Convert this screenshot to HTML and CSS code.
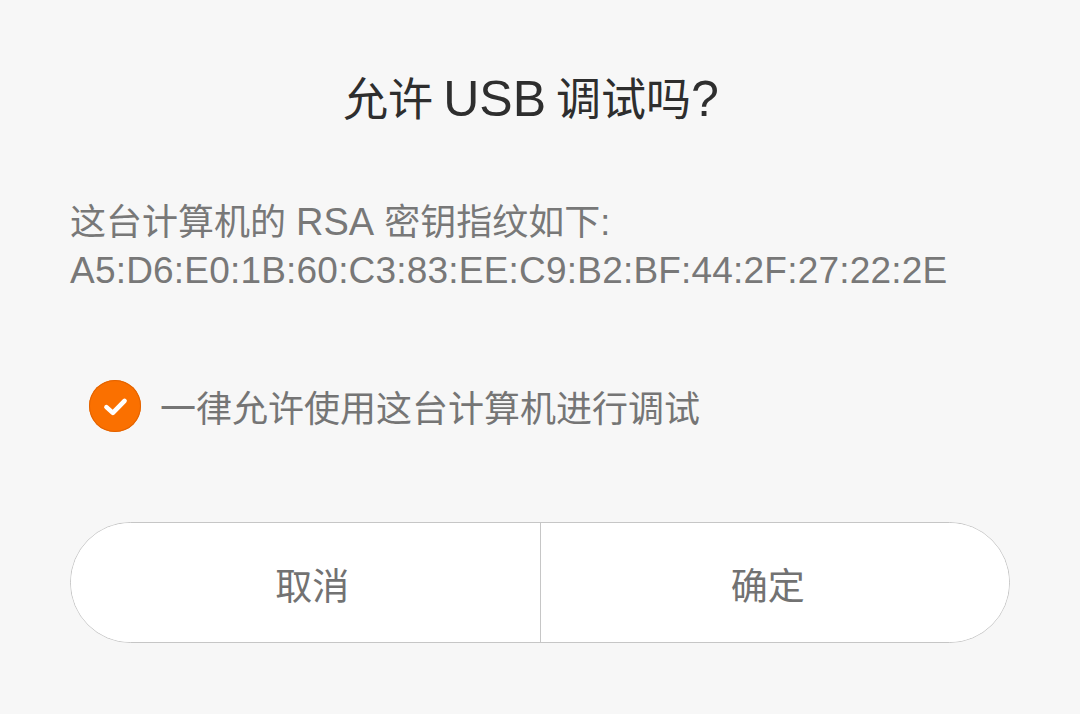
FILE: index.html
```html
<!DOCTYPE html>
<html lang="zh-CN">
<head>
<meta charset="utf-8">
<link rel="stylesheet" href="styles.css">
</head>
<body>
<div class="dialog">
  <h1 class="title">允许 <span class="lat">USB</span> 调试吗<span class="lat">?</span></h1>
  <div class="message">
    <p>这台计算机的 <span class="lat">RSA</span> 密钥指纹如下:</p>
    <p class="fingerprint">A5:D6:E0:1B:60:C3:83:EE:C9:B2:BF:44:2F:27:22:2E</p>
  </div>
  <div class="check-row">
    <span class="check">
      <svg viewBox="0 0 24 24"><path d="M4.5 12.5 L9.8 17.3 L19.5 7.3" fill="none" stroke="#fff" stroke-width="3.8" stroke-linecap="round" stroke-linejoin="round"/></svg>
    </span>
    <span class="check-label">一律允许使用这台计算机进行调试</span>
  </div>
  <div class="buttons">
    <button class="btn">取消</button>
    <button class="btn">确定</button>
  </div>
</div>
</body>
</html>
```
FILE: styles.css
```css
html, body {
  margin: 0;
  padding: 0;
  background: #f7f7f7;
  height: 100%;
}
body {
  font-family: "Liberation Sans", "Noto Sans CJK SC", sans-serif;
  -webkit-font-smoothing: antialiased;
}
.dialog {
  padding: 69px 70px 0 70px;
  display: flex;
  flex-direction: column;
}
.title {
  margin: 0;
  text-align: center;
  font-family: "Noto Sans CJK SC", sans-serif;
  font-size: 45px;
  font-weight: 400;
  color: #2e2e2e;
  line-height: 56px;
  padding-right: 18px;
}
.title .lat {
  font-family: "Liberation Sans", sans-serif;
  font-size: 50px;
  font-weight: 400;
  line-height: 1;
}
.message {
  margin-top: 74px;
  color: #787878;
  font-size: 36px;
  line-height: 48px;
}
.message p {
  margin: 0;
}
.message .lat {
  font-size: 38px;
  line-height: 1;
}
.message .fingerprint {
  font-size: 37px;
  letter-spacing: 0.2px;
}
.check-row {
  margin-top: 85px;
  display: flex;
  align-items: center;
  gap: 19px;
  padding-left: 19px;
}
.check {
  width: 52px;
  height: 52px;
  border-radius: 50%;
  background: #fa7000;
  box-shadow: inset 0 0 0 1px #e26300;
  display: flex;
  align-items: center;
  justify-content: center;
}
.check svg {
  width: 29px;
  height: 29px;
}
.check-label {
  font-family: "Noto Sans CJK SC", sans-serif;
  font-size: 36px;
  color: #757575;
  line-height: 52px;
}
.buttons {
  margin-top: 90px;
  height: 121px;
  box-sizing: border-box;
  display: flex;
  border: 1px solid #c6c6c6;
  border-radius: 61px;
  background: #fff;
  overflow: hidden;
}
.btn {
  flex: 1;
  border: none;
  background: #fff;
  font-family: "Noto Sans CJK SC", sans-serif;
  font-size: 37px;
  color: #727272;
  padding: 0;
  padding-top: 2px;
}
.btn:first-child {
  border-right: 1px solid #c6c6c6;
  padding-left: 14px;
}
.btn:last-child {
  padding-right: 14px;
}
```
